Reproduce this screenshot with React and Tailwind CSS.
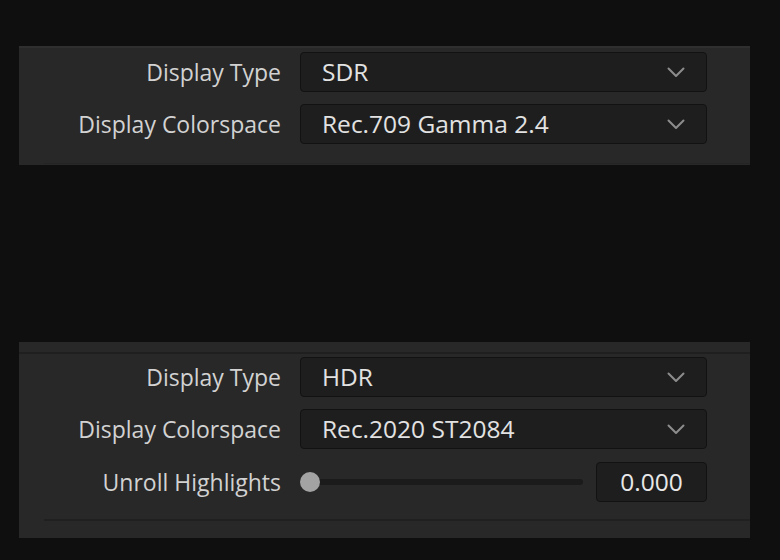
import React from 'react';

const FONT = { fontFamily: '"Open Sans", "Noto Sans", sans-serif' };

function Chevron() {
  return (
    <svg width="18" height="11" viewBox="0 0 18 11" fill="none" className="shrink-0">
      <path d="M1.5 1.5 L9 9 L16.5 1.5" stroke="#8c8c8c" strokeWidth="2" strokeLinecap="round" strokeLinejoin="round" />
    </svg>
  );
}

function Label({ children }) {
  return (
    <div className="w-[262px] text-right text-[23px] text-[#d2d2d2] leading-none whitespace-nowrap">{children}</div>
  );
}

function Row({ label, children }) {
  return (
    <div className="flex items-center h-[40px]">
      <Label>{label}</Label>
      <div className="ml-[19px] w-[407px] h-full">{children}</div>
    </div>
  );
}

function Select({ value }) {
  return (
    <div className="h-full flex items-center justify-between bg-[#1e1e1e] border border-[#121212] rounded-[4px] pl-[21px] pr-[21px]">
      <span className="text-[24.5px] text-[#e2e2e2] leading-none whitespace-nowrap">{value}</span>
      <Chevron />
    </div>
  );
}

export default function App() {
  return (
    <div className="w-[780px] h-[560px] bg-[#0f0f0f] overflow-hidden pt-[46px]" style={FONT}>
      {/* SDR panel */}
      <div className="ml-[19px] w-[731px] bg-[#282828] border-t-2 border-[#2f2f2f]">
        <div className="pt-[4px] pb-[19px] flex flex-col gap-[12px]">
          <Row label="Display Type"><Select value="SDR" /></Row>
          <Row label="Display Colorspace"><Select value="Rec.709 Gamma 2.4" /></Row>
        </div>
        <div className="ml-[25px] h-[1px] bg-[#242424]" />
        <div className="h-[1px]" />
      </div>

      <div className="h-[177px]" />

      {/* HDR panel */}
      <div className="ml-[19px] w-[731px] h-[196px] bg-[#282828]">
        <div className="h-[10px]" />
        <div className="h-[2px] bg-[#1f1f1f]" />
        <div className="pt-[3px] flex flex-col gap-[12px]">
          <Row label="Display Type"><Select value="HDR" /></Row>
          <Row label="Display Colorspace"><Select value="Rec.2020 ST2084" /></Row>
          <div className="flex items-center h-[40px] mt-[1px]">
            <Label>Unroll Highlights</Label>
            <div className="ml-[19px] w-[407px] h-full flex items-center">
              <div className="relative w-[283px] h-[20px] flex items-center">
                <div className="ml-[1px] h-[6px] w-[282px] rounded-full bg-[#1b1b1b]" />
                <div className="absolute left-0 top-0 w-[20px] h-[20px] rounded-full bg-[#a3a3a3]" />
              </div>
              <div className="ml-auto w-[111px] h-full flex items-center justify-center bg-[#1e1e1e] border border-[#121212] rounded-[4px] text-[24.5px] text-[#e8e8e8] leading-none">
                0.000
              </div>
            </div>
          </div>
        </div>
        <div className="mt-[17px] ml-[25px] h-[2px] bg-[#202020]" />
      </div>
    </div>
  );
}
